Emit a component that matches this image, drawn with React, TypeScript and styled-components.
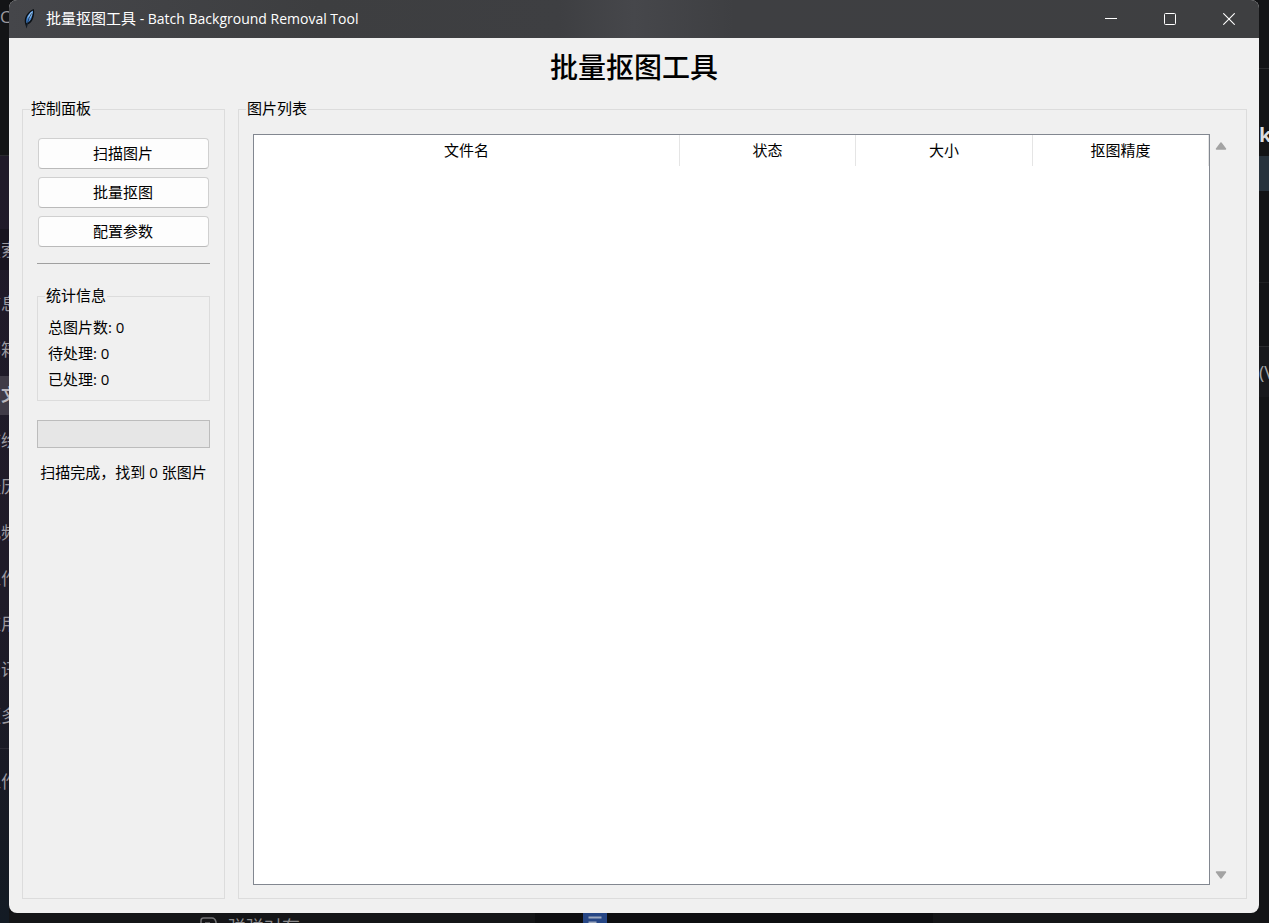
import React from "react";
import styled, { createGlobalStyle } from "styled-components";

const uiFont = '"Open Sans", "Noto Sans CJK SC", sans-serif';

const GlobalStyle = createGlobalStyle`
  *, *::before, *::after { box-sizing: border-box; }
  body { margin: 0; background: #131416; font-family: ${uiFont}; font-size: 15px; line-height: 20px; color: #000; }
`;

const Desktop = styled.div`
  display: grid;
  grid-template-columns: 9px minmax(0, 1fr) 10px;
  grid-template-rows: minmax(0, 1fr) 10px;
  height: 100vh;
  min-height: 560px;
  overflow: hidden;
  background: #111214;
`;

/* Slivers of the applications behind the window */
const LeftStrip = styled.div`
  grid-row: 1 / 3;
  overflow: hidden;
  white-space: nowrap;
  color: #9b99a0;
  font-size: 17px;
  background: linear-gradient(#131416 0 155px, #201a29 156px, #1f1b28 600px, #171a24 820px, #131b24);
`;

const StripBlock = styled.div<{ $height: number; $fill?: string; $line?: string }>`
  display: flex;
  align-items: center;
  height: ${(p) => p.$height}px;
  background: ${(p) => p.$fill ?? "transparent"};
  border-bottom: ${(p) => (p.$line ? `1px solid ${p.$line}` : "none")};
`;

const SideMenu = styled.ul`
  display: grid;
  grid-auto-rows: 1fr;
  height: 458px;
  margin: 0;
  padding: 0;
  list-style: none;
`;

const SideItem = styled.li<{ $active?: boolean }>`
  display: flex;
  align-items: center;
  margin: 3px 0;
  font-weight: ${(p) => (p.$active ? 700 : 400)};
  color: ${(p) => (p.$active ? "#b9b6bd" : "#9b99a0")};
  background: ${(p) => (p.$active ? "#403b47" : "transparent")};
`;

const CutText = styled.span`
  margin-left: -16px;
`;

const RightStrip = styled.div`
  grid-column: 3;
  grid-row: 1 / 3;
  overflow: hidden;
  white-space: nowrap;
  color: #a4a4a6;
  font-size: 18px;
  background: #131416;
`;

const StrongLetter = styled.span`
  font-size: 20px;
  font-weight: 700;
  color: #dcdcde;
`;

const BottomStrip = styled.div`
  grid-column: 2;
  grid-row: 2;
  display: grid;
  grid-template-columns: 526px 398px minmax(0, 1fr);
  overflow: hidden;
  background: #0f1012;
`;

const BottomPane = styled.div<{ $fill: string; $inset: number }>`
  display: flex;
  align-items: flex-start;
  gap: 11px;
  height: 30px;
  padding: 4px 0 0 ${(p) => p.$inset}px;
  background: ${(p) => p.$fill};
  color: #8b8b8d;
  font-size: 18px;
`;

const DocPane = styled(BottomPane)`
  padding-top: 0;
`;

const Window = styled.main`
  grid-column: 2;
  grid-row: 1;
  display: flex;
  flex-direction: column;
  overflow: hidden;
  border-radius: 8px;
  background: #f0f0f0;
`;

const TitleBar = styled.header`
  display: flex;
  align-items: center;
  flex: none;
  height: 38px;
  padding: 0 1px 0 12px;
  background: linear-gradient(90deg, #45464a, #3d3e40 25%, #3e3f42 44%, #46474b 50%, #3e3f42 58%, #3e3f41);
  color: #fff;
`;

const Caption = styled.span`
  flex: 1;
  margin-left: 9px;
  padding-bottom: 2px;
  font-size: 15px;
  white-space: nowrap;
`;

const CaptionLatin = styled.span`
  font-size: 14px;
`;

const WindowButton = styled.button`
  display: flex;
  align-items: center;
  justify-content: center;
  width: 59px;
  height: 38px;
  padding: 0;
  border: 0;
  background: transparent;
  color: inherit;
`;

const Heading = styled.h1`
  flex: none;
  margin: 0;
  padding-bottom: 5px;
  font: 500 28px/56px "Noto Sans CJK SC", sans-serif;
  text-align: center;
`;

const Body = styled.div`
  display: grid;
  grid-template-columns: 203px minmax(0, 1fr);
  gap: 13px;
  flex: 1;
  min-height: 0;
  padding: 0 12px 14px 13px;
`;

const Group = styled.fieldset`
  min-width: 0;
  margin: 0;
  padding: 19px 14px 14px;
  border: 1px solid #dcdcdc;
`;

const GroupName = styled.legend`
  margin-left: -7px;
  padding: 0 1px 2px;
  line-height: 18px;
`;

const ListGroup = styled(Group)`
  display: flex;
  padding: 15px 14px 13px;
`;

const ButtonStack = styled.div`
  display: grid;
  gap: 8px;
  padding: 0 1px;
`;

const ActionButton = styled.button`
  height: 31px;
  padding: 0 1px 2px 0;
  border: 1px solid #d0d0d0;
  border-bottom-color: #bababa;
  border-radius: 4px;
  background: #fdfdfd;
  color: #000;
  font: 15px/20px ${uiFont};
`;

const Separator = styled.hr`
  height: 1px;
  margin: 16px 0 22px;
  border: 0;
  background: #a0a0a0;
`;

const StatsGroup = styled(Group)`
  padding: 8px 10px;
`;

const StatsName = styled(GroupName)`
  margin-left: -3px;
`;

const StatLine = styled.p`
  margin: 0;
  line-height: 26px;
`;

const Progress = styled.progress`
  display: block;
  appearance: none;
  width: 100%;
  height: 28px;
  margin: 19px 0 14px;
  border: 1px solid #bcbcbc;
  background: #e6e6e6;
  &::-webkit-progress-bar { background: #e6e6e6; }
  &::-webkit-progress-value { background: #06b025; }
`;

const Status = styled.p`
  margin: 0;
  text-align: center;
  white-space: nowrap;
`;

const TableFrame = styled.div`
  flex: 1;
  min-width: 0;
  border: 1px solid #828790;
  background: #fff;
`;

const Table = styled.table`
  width: 100%;
  table-layout: fixed;
  border-collapse: collapse;
`;

const HeadCell = styled.th<{ $width?: number }>`
  width: ${(p) => (p.$width ? `${p.$width}px` : "auto")};
  height: 31px;
  padding: 0 0 2px;
  border-right: 1px solid #e5e5e5;
  font-weight: 400;
  text-align: center;
`;

const ScrollTrack = styled.div`
  display: flex;
  flex-direction: column;
  justify-content: space-between;
  flex: none;
  width: 22px;
  padding-top: 2px;
`;

const ScrollButton = styled.button`
  display: flex;
  align-items: center;
  justify-content: center;
  height: 20px;
  padding: 0;
  border: 0;
  background: transparent;
`;

const menu = ["信息", "邮箱", "中文", "描绘", "经历", "视频", "工作", "应用", "资讯", "更多"];
const actions = ["扫描图片", "批量抠图", "配置参数"];
const stats = [
  { name: "总图片数", value: 0 },
  { name: "待处理", value: 0 },
  { name: "已处理", value: 0 },
];
const columns: { title: string; width?: number }[] = [
  { title: "文件名" },
  { title: "状态", width: 176 },
  { title: "大小", width: 177 },
  { title: "抠图精度", width: 176 },
];

const Feather = () => (
  <svg width="16" height="22" viewBox="0 0 16 22" aria-hidden="true">
    <path d="M12.800 1C9.500 2 5.600 5.800 4.300 9.600c-.8 2.400-.7 4.700 0 6.600l1.300 4.300.9-3.900c3-1.200 4.900-3.600 5.800-6.800.8-2.800 1.300-6 .5-8.800z" fill="#0c1014" />
    <path d="M12 2.400C9 4.200 6.300 7.200 5.600 10.300c-.5 2-.4 3.600 0 5 2.500-1.100 4.300-3 5.100-5.800.8-2.500 1.300-5 1.300-7.100z" fill="#3f80cc" />
    <path d="M11.600 3C8.800 5 7 7.500 6.300 10.700l1.900-2.400-.2 3.400C10.200 9.800 11.400 6.500 11.600 3z" fill="#94c4f4" />
    <path d="M10.600 5.400C8.600 8.800 6.700 12.500 5.700 18.600" stroke="#1c2c40" strokeWidth=".8" fill="none" />
  </svg>
);

export default function App() {
  return (
    <>
      <GlobalStyle />
      <Desktop>
        <LeftStrip>
          <StripBlock $height={34}>
            <span>CT</span>
          </StripBlock>
          <StripBlock $height={122} $line="#292a2d" />
          <StripBlock $height={73} />
          <StripBlock $height={41} $fill="#18141f">
            <CutText>搜索</CutText>
          </StripBlock>
          <StripBlock $height={11} />
          <SideMenu>
            {menu.map((name) => (
              <SideItem key={name} $active={name === "中文"}>
                <CutText>{name}</CutText>
              </SideItem>
            ))}
          </SideMenu>
          <StripBlock $height={10} $line="#2b2a35" />
          <StripBlock $height={66}>
            <CutText>工作</CutText>
          </StripBlock>
        </LeftStrip>

        <Window>
          <TitleBar>
            <Feather />
            <Caption>
              批量抠图工具<CaptionLatin> - Batch Background Removal Tool</CaptionLatin>
            </Caption>
            <WindowButton aria-label="最小化">
              <svg width="12" height="12" viewBox="0 0 12 12">
                <path d="M0 5.500h12" stroke="#fff" />
              </svg>
            </WindowButton>
            <WindowButton aria-label="最大化">
              <svg width="12" height="12" viewBox="0 0 12 12">
                <rect x=".5" y=".5" width="11" height="11" rx="1" stroke="#fff" fill="none" />
              </svg>
            </WindowButton>
            <WindowButton aria-label="关闭">
              <svg width="12" height="12" viewBox="0 0 12 12">
                <path d="M.3.3l11.400 11.400M11.700.3L.3 11.700" stroke="#fff" strokeWidth="1.100" />
              </svg>
            </WindowButton>
          </TitleBar>

          <Heading>批量抠图工具</Heading>

          <Body>
            <Group>
              <GroupName>控制面板</GroupName>
              <ButtonStack>
                {actions.map((label) => (
                  <ActionButton key={label}>{label}</ActionButton>
                ))}
              </ButtonStack>
              <Separator />
              <StatsGroup>
                <StatsName>统计信息</StatsName>
                {stats.map((s) => (
                  <StatLine key={s.name}>
                    {s.name}: {s.value}
                  </StatLine>
                ))}
              </StatsGroup>
              <Progress value={0} max={100} aria-label="处理进度" />
              <Status>扫描完成，找到 0 张图片</Status>
            </Group>

            <ListGroup>
              <GroupName>图片列表</GroupName>
              <TableFrame>
                <Table>
                  <thead>
                    <tr>
                      {columns.map((c) => (
                        <HeadCell key={c.title} $width={c.width} scope="col">
                          {c.title}
                        </HeadCell>
                      ))}
                    </tr>
                  </thead>
                  <tbody />
                </Table>
              </TableFrame>
              <ScrollTrack>
                <ScrollButton aria-label="向上滚动">
                  <svg width="12" height="10" viewBox="0 0 12 10">
                    <path d="M6 2L10.500 8H1.500z" fill="#a3a3a3" stroke="#a3a3a3" strokeWidth="1.500" strokeLinejoin="round" />
                  </svg>
                </ScrollButton>
                <ScrollButton aria-label="向下滚动">
                  <svg width="12" height="10" viewBox="0 0 12 10">
                    <path d="M6 8L10.500 2H1.500z" fill="#a3a3a3" stroke="#a3a3a3" strokeWidth="1.500" strokeLinejoin="round" />
                  </svg>
                </ScrollButton>
              </ScrollTrack>
            </ListGroup>
          </Body>
        </Window>

        <RightStrip>
          <StripBlock $height={69} $line="#2a2b2d" />
          <StripBlock $height={45} />
          <StripBlock $height={42}>
            <StrongLetter>k</StrongLetter>
          </StripBlock>
          <StripBlock $height={35} $fill="#27323c" />
          <StripBlock $height={92} $line="#202123" />
          <StripBlock $height={64} $line="#2a2b2d" />
          <StripBlock $height={50} $fill="#18191c">
            <span>(V</span>
          </StripBlock>
        </RightStrip>

        <BottomStrip>
          <BottomPane $fill="#141517" $inset={191}>
            <svg width="17" height="18" viewBox="0 0 17 18" aria-hidden="true">
              <path d="M1 17V3.500Q1 1 3.500 1H12q3 0 4 4v12zM5 6h5" stroke="#737375" strokeWidth="1.500" fill="none" />
            </svg>
            <span>弹弹对存</span>
          </BottomPane>
          <DocPane $fill="#0d0e10" $inset={48}>
            <svg width="24" height="24" viewBox="0 0 24 24" aria-hidden="true">
              <path d="M0 0h24v24H0z" fill="#264685" />
              <path d="M5.500 4.500h13M5.500 9.500h8" stroke="#9aa6bd" strokeWidth="2" />
            </svg>
          </DocPane>
          <BottomPane $fill="#141517" $inset={0} />
        </BottomStrip>
      </Desktop>
    </>
  );
}
